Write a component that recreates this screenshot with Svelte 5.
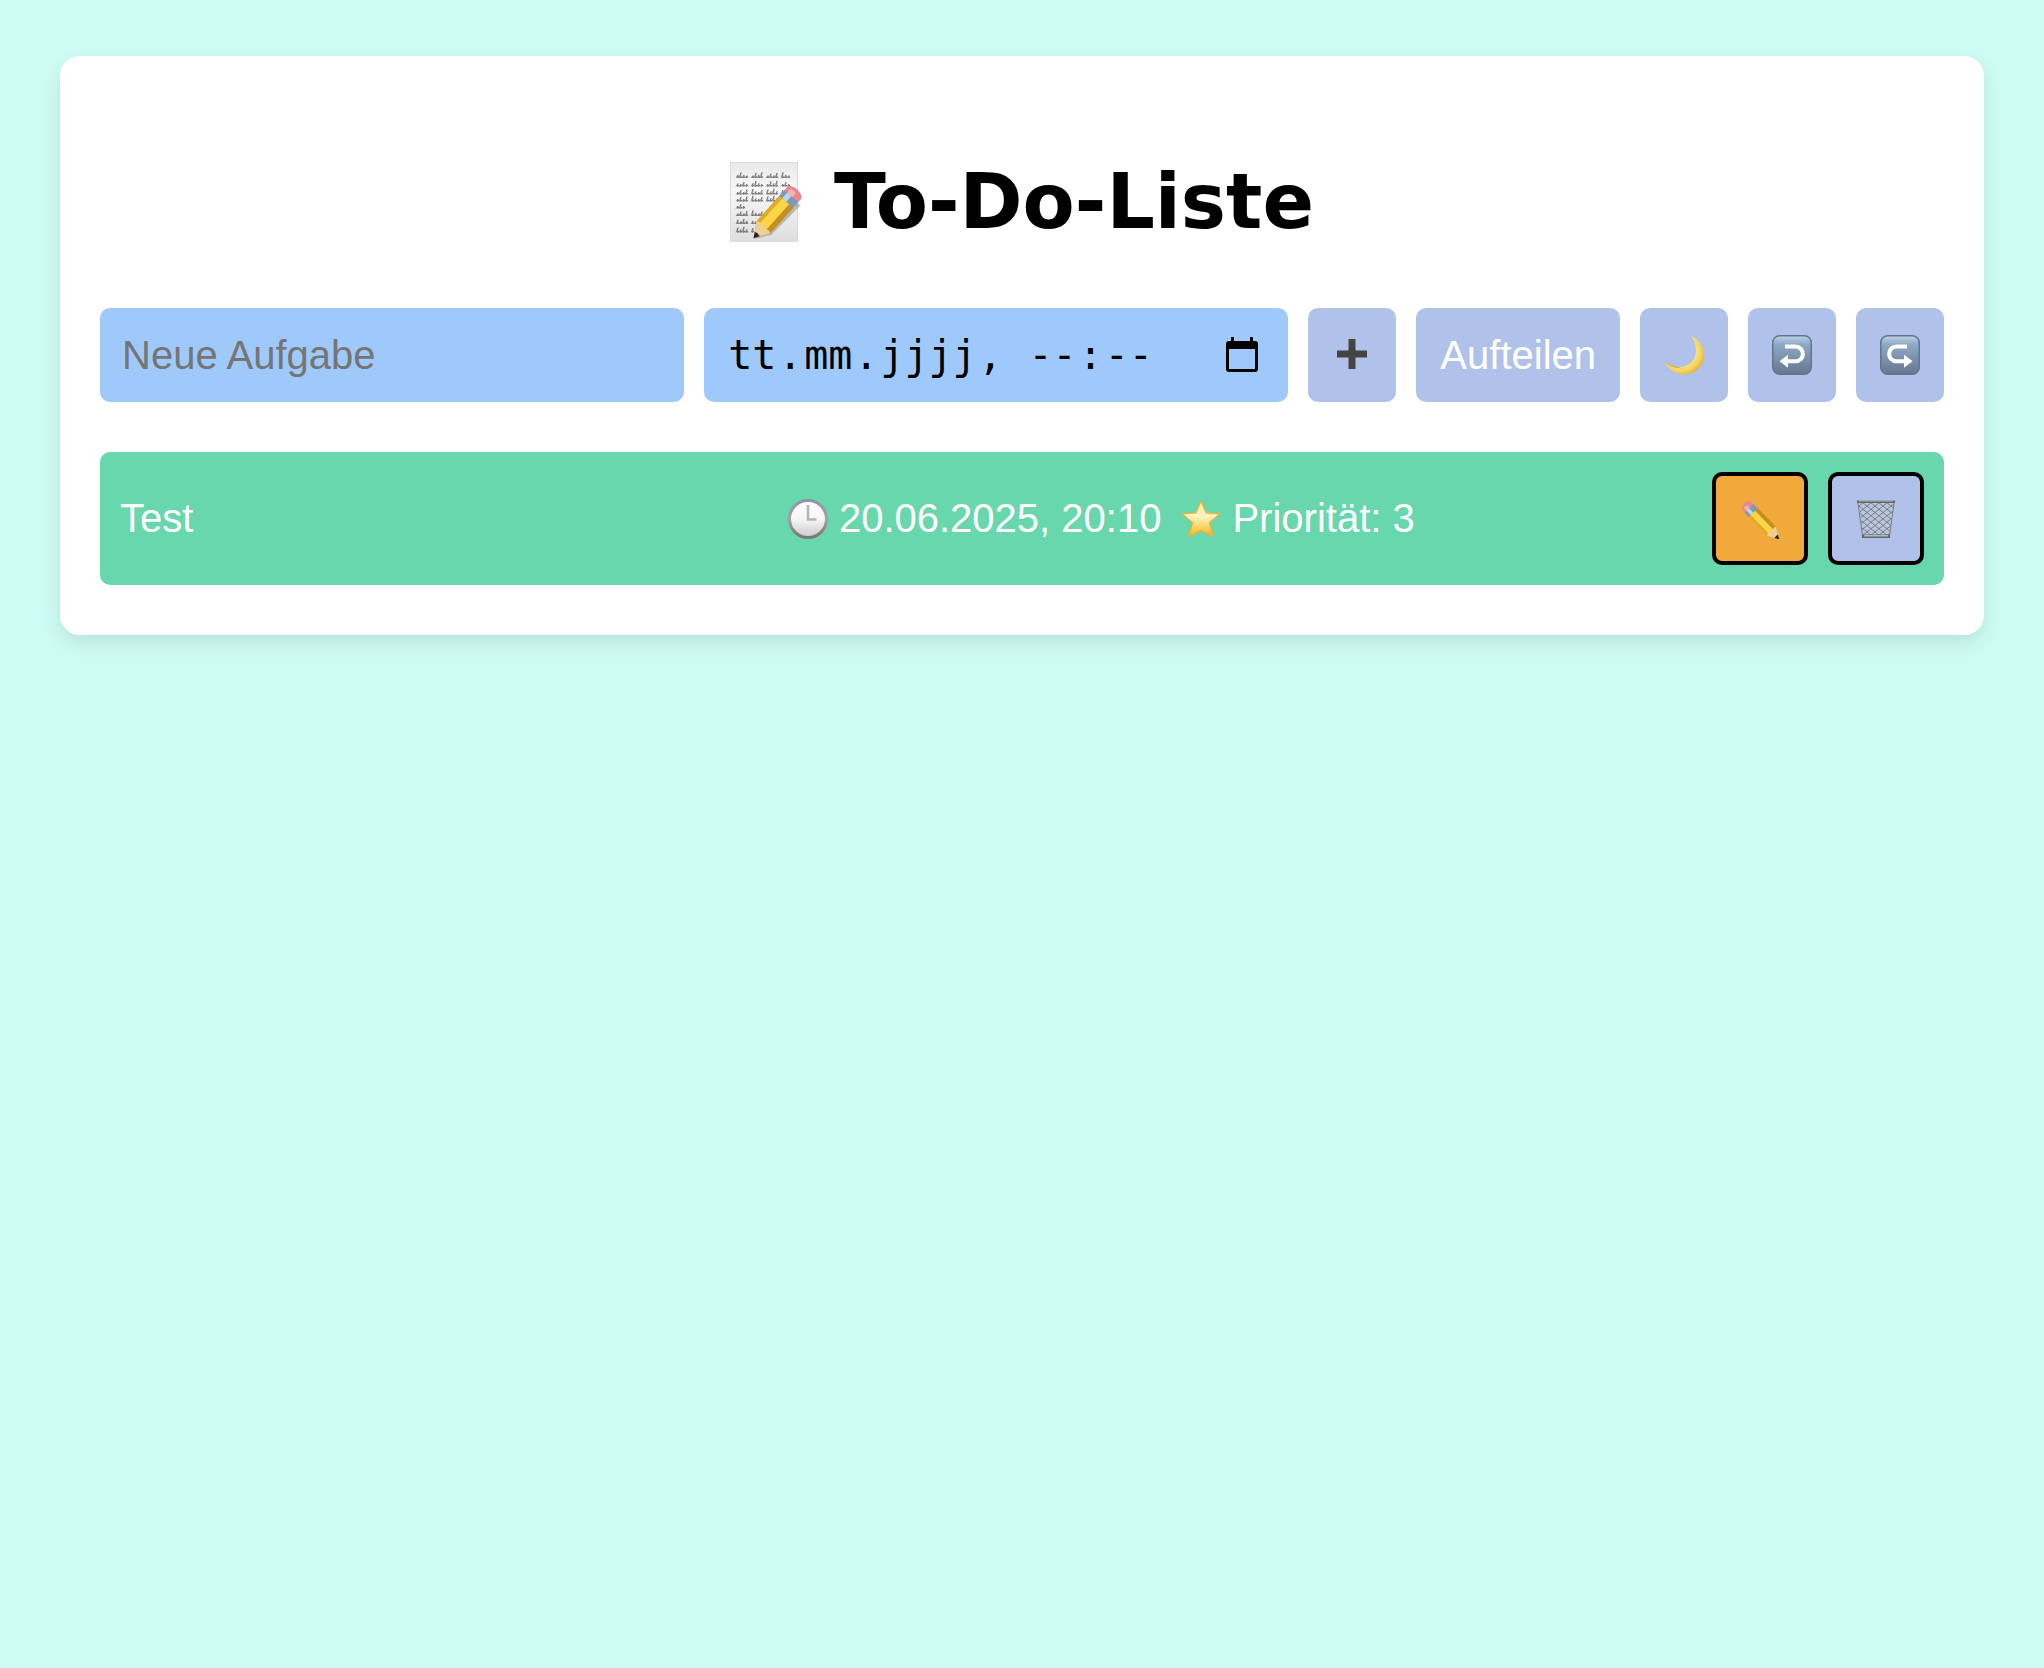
<script>
  let task = $state('');
  let dark = $state(false);
  let items = $state([{ text: 'Test', due: '20.06.2025, 20:10', priority: 3 }]);
  // Handwriting lines on the memo icon: y position and end x
  const lines = [
    [13, 61],
    [21.5, 60],
    [29.5, 60],
    [36.5, 50],
    [43.5, 17],
    [51, 38],
    [59, 34],
    [67.5, 26]
  ];
  const scribble = (y, end) => {
    let d = `M6 ${y + 3}`;
    let x = 6;
    let i = 0;
    while (x + 3 <= end) {
      const h = [9, 5, 4, 7, 4, 8, 5][(i + Math.round(y)) % 7];
      d += i % 5 === 4 ? `m3 0` : `l2 ${-h / 1.6}l-.5 ${h / 1.6}q1 -3 1.5 0`;
      x += 3;
      i++;
    }
    return d;
  };
</script>

{#snippet pencilBody()}
  <!-- Pencil drawn upright, tip at the bottom; 14 wide, 64 tall -->
  <path d="M-7 8V3a7 5 0 0 1 14 0v5z" fill="#e58a8f" />
  <path d="M-4 8V2a4 3 0 0 1 5 0v6z" fill="#f6b3b5" />
  <path d="M-7 7h14v9h-14z" fill="#7f98b5" />
  <path d="M-4 7h4v9h-4z" fill="#c3d3e3" />
  <path d="M-7 15h14v35l-7 14-7-14z" fill="#e0aa25" />
  <path d="M-4 15h7v37h-7z" fill="#fbd548" />
  <path d="M3 15h4v35l-4 3z" fill="#c38f20" />
  <path d="M-7 50q3 -3 5 0q3 -2 4 0q3 -3 5 0l-7 14z" fill="#edcf98" />
  <path d="M-2.5 59q2.500 -1 5 0L0 65z" fill="#252525" />
{/snippet}

<main class="card">
  <h1>
    <svg class="memo" viewBox="0 0 76 80" aria-hidden="true">
      <defs>
        <linearGradient id="paper" x1="0" y1="0" x2="0" y2="1">
          <stop offset="0" stop-color="#e9e9e9" />
          <stop offset=".35" stop-color="#f8f8f8" />
          <stop offset="1" stop-color="#dedede" />
        </linearGradient>
      </defs>
      <path d="M.5 .5h67v79H.5z" fill="url(#paper)" stroke="#dadada" />
      {#each lines as [y, end]}
        <path d={scribble(y, end)} fill="none" stroke="#4a4a4a" stroke-width=".6" />
      {/each}
      <path d="M24 77l38-38 9 4-30 30z" fill="#555" opacity=".35" />
      <g transform="translate(66 29) rotate(42) scale(1.32 .98)">{@render pencilBody()}</g>
    </svg>
    <span>To-Do-Liste</span>
  </h1>

  <form class="controls" onsubmit={(e) => e.preventDefault()}>
    <input class="field" type="text" placeholder="Neue Aufgabe" aria-label="Neue Aufgabe" bind:value={task} />
    <div class="field date" role="group" aria-label="Fälligkeit">
      <input class="two" placeholder="tt" aria-label="Tag" maxlength="2" />.<input
        class="two" placeholder="mm" aria-label="Monat" maxlength="2" />.<input
        class="four" placeholder="jjjj" aria-label="Jahr" maxlength="4" /><span>{', '}</span><input
        class="two" placeholder="--" aria-label="Stunde" maxlength="2" />:<input
        class="two" placeholder="--" aria-label="Minute" maxlength="2" />
      <button class="picker" type="button" aria-label="Kalender öffnen">
        <svg viewBox="0 0 32 36" aria-hidden="true">
          <path fill-rule="evenodd" d="M5 0h3v4h16V0h3v4h2a3 3 0 0 1 3 3v25a3 3 0 0 1-3 3H3a3 3 0 0 1-3-3V7a3 3 0 0 1 3-3h2zM3 12v20h26V12z" />
        </svg>
      </button>
    </div>
    <button class="btn" type="submit" aria-label="Hinzufügen">
      <svg class="icon" viewBox="0 0 40 40" aria-hidden="true">
        <path d="M16.500 4h7v11.500H35v7H23.500V34h-7V22.500H5v-7h11.500z" fill="#444" />
      </svg>
    </button>
    <button class="btn" type="button">Aufteilen</button>
    <button class="btn" type="button" aria-label="Dunkelmodus" aria-pressed={dark} onclick={() => (dark = !dark)}>
      <svg class="icon" viewBox="0 0 40 40" aria-hidden="true">
        <defs>
          <radialGradient id="moon" cx=".4" cy=".4" r=".65">
            <stop offset=".55" stop-color="#fbe488" />
            <stop offset=".8" stop-color="#f5d35c" />
            <stop offset="1" stop-color="#dfb03c" />
          </radialGradient>
        </defs>
        <path d="M26.500 .5C35 4 40 12 40 20c0 11-9 19.500-20 19.500C11 39.500 3.500 34 .5 25.500 5 30.500 10 32 15.500 32 25 32 32 25 32 15.500c0-5.500-1.500-10-5.500-15z" fill="url(#moon)" />
        <path d="M1 26.500c4.500 4.300 9 6 14.500 6" fill="none" stroke="#c49a3b" stroke-width=".8" />
      </svg>
    </button>
    {#each ['undo', 'redo'] as kind}
      <button class="btn" type="button" aria-label={kind === 'undo' ? 'Rückgängig' : 'Wiederholen'}>
        <svg class="icon" viewBox="0 0 40 40" aria-hidden="true">
          <defs>
            <linearGradient id={kind} x1="0" y1="0" x2="0" y2="1">
              <stop offset="0" stop-color="#bfd3e6" />
              <stop offset=".22" stop-color="#8fa9c5" />
              <stop offset="1" stop-color="#64788f" />
            </linearGradient>
          </defs>
          <rect x=".75" y=".75" width="38.500" height="38.500" rx="7" fill="url(#{kind})" stroke="#5f7690" stroke-width="1.500" />
          <g transform={kind === 'redo' ? 'translate(40 0) scale(-1 1)' : undefined}>
            <path d="M13 11.500h10.500a7.300 7.300 0 0 1 0 14.800H15" fill="none" stroke="#fff" stroke-width="4" />
            <path d="M7.500 26.300l8.500-6.500v13z" fill="#fff" />
          </g>
        </svg>
      </button>
    {/each}
  </form>

  <ul>
    {#each items as item}
      <li>
        <span class="text">{item.text}</span>
        <div class="meta">
          <span>
            <svg class="icon" viewBox="0 0 40 40" aria-hidden="true">
              <defs>
                <linearGradient id="dial" x1="0" y1="0" x2="0" y2="1">
                  <stop offset="0" stop-color="#fff" />
                  <stop offset=".5" stop-color="#f6f6f6" />
                  <stop offset="1" stop-color="#c9c9c9" />
                </linearGradient>
                <linearGradient id="rim" x1="0" y1="0" x2="0" y2="1">
                  <stop offset="0" stop-color="#8e93a6" />
                  <stop offset=".5" stop-color="#a3a3a8" />
                  <stop offset="1" stop-color="#77777a" />
                </linearGradient>
              </defs>
              <circle cx="20" cy="20" r="18.500" fill="url(#dial)" stroke="url(#rim)" stroke-width="3" />
              <path d="M20 6v14.500h8.500" fill="none" stroke="#b5b3b5" stroke-width="2.500" />
            </svg>
            {item.due}
          </span>
          <span>
            <svg class="icon" viewBox="0 0 40 40" aria-hidden="true">
              <defs>
                <linearGradient id="star" x1="0" y1="0" x2="0" y2="1">
                  <stop offset="0" stop-color="#ffeb9c" />
                  <stop offset=".45" stop-color="#fff3bd" />
                  <stop offset="1" stop-color="#f5b414" />
                </linearGradient>
              </defs>
              <path d="M20 2l5 11.800 14 1-10.700 9L32.500 37.500 20 31.500 7.500 37.500l4.200-13.700L1 14.800l14-1z" fill="url(#star)" stroke="#eeb03c" stroke-width="1.200" stroke-linejoin="round" />
            </svg>
            Priorität: {item.priority}
          </span>
        </div>
        <div class="actions">
          <button class="btn edit" type="button" aria-label="Bearbeiten">
            <svg class="icon" viewBox="0 0 40 40" aria-hidden="true">
              <g transform="translate(5.500 5.500) rotate(-44) scale(.9 .75)">{@render pencilBody()}</g>
            </svg>
          </button>
          <button class="btn" type="button" aria-label="Löschen">
            <svg class="icon" viewBox="0 0 40 40" aria-hidden="true">
              <defs>
                <clipPath id="basket"><path d="M2 4h36l-5 33H7z" /></clipPath>
              </defs>
              <path d="M2 4h36l-5 33H7z" fill="#c4cbd5" opacity=".4" />
              <g clip-path="url(#basket)" fill="none" stroke="#77746f" stroke-width=".9">
                {#each [-42, -34, -26, -18, -10, -2, 6, 14, 22, 30] as x}
                  <path d="M{x} 3l42 34M{x + 42} 3l-42 34" />
                {/each}
              </g>
              <path d="M2 4l4.500 33M38 4l-4.500 33" stroke="#807d78" stroke-width="1" />
              <path d="M1 1.500h38v2.500H1z" fill="#6d675f" />
              <path d="M3 1h34v1.500H3z" fill="#9db2c2" />
              <path d="M6 35.500h28v3.500H6z" fill="#666" />
              <path d="M8 36h24v1.500H8z" fill="#a9bccb" />
            </svg>
          </button>
        </div>
      </li>
    {/each}
  </ul>
</main>

<style>
  :global(body) {
    background: #cefcf5;
    font-family: 'Liberation Sans', Arial, sans-serif;
    font-size: 40px;
  }
  .card {
    margin: 56px 60px;
    padding: 96px 40px 50px;
    background: #fff;
    border-radius: 20px;
    box-shadow: 0 8px 20px rgba(0, 0, 0, 0.1);
  }
  h1 {
    display: flex;
    align-items: center;
    justify-content: center;
    gap: 28px;
    margin: 0 0 56px;
    font: bold 76px/100px 'DejaVu Sans', sans-serif;
  }
  .memo {
    width: 76px;
    height: 80px;
  }
  .controls {
    display: flex;
    gap: 20px;
    margin-bottom: 50px;
  }
  input,
  button {
    box-sizing: border-box;
    font: inherit;
    border: 0;
  }
  .field {
    flex: 1 1 0;
    min-width: 0;
    height: 94px;
    padding: 0 22px;
    border-radius: 10px;
    background: #a0c9fb;
    box-sizing: border-box;
  }
  .field::placeholder {
    color: #757575;
  }
  .date {
    display: flex;
    align-items: center;
    font-family: 'DejaVu Sans Mono', monospace;
    white-space: pre;
  }
  .date input {
    height: 60px;
    padding: 0 2px;
    background: transparent;
    flex: none;
  }
  .date input::placeholder {
    color: #000;
    opacity: 1;
  }
  .two {
    width: 52px;
  }
  .four {
    width: 100px;
  }
  .picker {
    margin: 0 8px 0 auto;
    padding: 0;
    background: transparent;
    line-height: 0;
  }
  .picker svg {
    width: 32px;
    height: 36px;
  }
  .btn {
    display: flex;
    align-items: center;
    justify-content: center;
    padding: 0 24px;
    border-radius: 10px;
    background: #b0c2ea;
    color: #fff;
    cursor: pointer;
  }
  .icon {
    display: block;
    flex: none;
    width: 40px;
    height: 40px;
  }
  ul {
    margin: 0;
    padding: 0;
    list-style: none;
  }
  li {
    display: flex;
    align-items: center;
    padding: 20px;
    border-radius: 10px;
    background: #68d7ad;
    color: #fff;
  }
  .text {
    flex: 2 1 auto;
  }
  .meta {
    display: flex;
    flex: 1 1 auto;
    gap: 20px;
  }
  .meta span {
    display: flex;
    align-items: center;
    gap: 11px;
  }
  .actions {
    display: flex;
    gap: 20px;
  }
  .actions .btn {
    height: 93px;
    border: 4px solid #000;
  }
  .actions .edit {
    background: #f1a93b;
  }
</style>
